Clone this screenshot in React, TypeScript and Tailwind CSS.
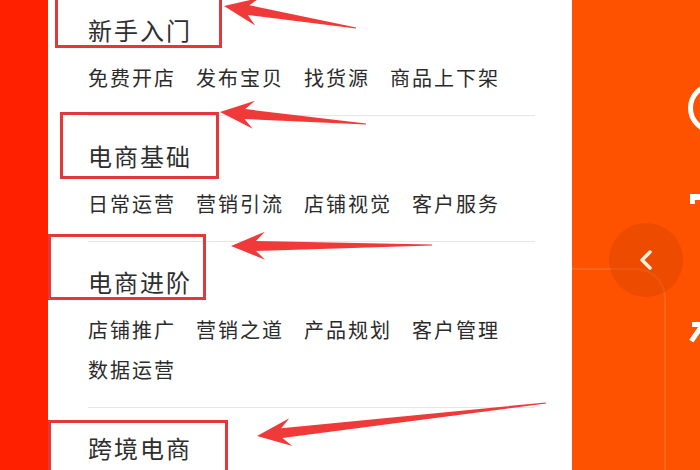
import React from "react";

type Section = {
  title: string;
  items: string[];
};

const sections: Section[] = [
  { title: "新手入门", items: ["免费开店", "发布宝贝", "找货源", "商品上下架"] },
  { title: "电商基础", items: ["日常运营", "营销引流", "店铺视觉", "客户服务"] },
  { title: "电商进阶", items: ["店铺推广", "营销之道", "产品规划", "客户管理", "数据运营"] },
  { title: "跨境电商", items: [] },
];

type Pt = [number, number];

// annotation arrows: tip, tail
const arrows: { tip: Pt; tail: Pt }[] = [
  { tip: [224, 6], tail: [356, 28] },
  { tip: [220, 112], tail: [366, 124] },
  { tip: [231, 246], tail: [432, 245] },
  { tip: [257, 436], tail: [546, 403] },
];

function arrowPoints(tip: Pt, tail: Pt) {
  const dx = tail[0] - tip[0];
  const dy = tail[1] - tip[1];
  const len = Math.hypot(dx, dy);
  const ux = dx / len;
  const uy = dy / len;
  const nx = -uy;
  const ny = ux;
  const at = (d: number, w: number): string =>
    `${(tip[0] + ux * d + nx * w).toFixed(1)},${(tip[1] + uy * d + ny * w).toFixed(1)}`;
  return [
    at(0, 0),
    at(34, 14),
    at(25, 5),
    at(len, 0.6),
    at(len, -0.6),
    at(25, -5),
    at(34, -14),
  ].join(" ");
}

const boxes = [
  "left-[55px] top-[-10px] w-[167px] h-[58px]",
  "left-[60px] top-[112px] w-[159px] h-[67px]",
  "left-[48px] top-[234px] w-[158px] h-[66px]",
  "left-[48px] top-[420px] w-[180px] h-[70px]",
];

export default function App() {
  return (
    <div
      className="relative flex h-[470px] w-[700px] overflow-hidden bg-white"
      style={{ fontFamily: '"Noto Sans CJK SC", "Noto Sans", sans-serif' }}
    >
      {/* red side strip */}
      <div className="w-[48px] shrink-0 bg-[#ff2000]" />

      {/* menu panel */}
      <div className="flex w-[524px] shrink-0 flex-col gap-[20px] pl-[40px] pr-[37px] pt-[10px]">
        {sections.map((s) => (
          <section key={s.title} className="flex flex-col">
            <h2 className="h-[40px] text-[24px] leading-[40px] tracking-[2px] text-[#2e2e2e]">
              {s.title}
            </h2>
            {s.items.length > 0 && (
              <>
                <ul className="mt-[8px] flex flex-wrap gap-x-[20px] text-[20px] leading-[40px] tracking-[2px] text-[#2b2b2b]">
                  {s.items.map((it) => (
                    <li key={it}>{it}</li>
                  ))}
                </ul>
                <div className="mt-[17px] h-px bg-[#e6e6e6]" />
              </>
            )}
          </section>
        ))}
      </div>

      {/* orange banner */}
      <div className="relative flex-1 bg-[#ff5200]">
        <div className="absolute left-0 top-[268px] h-[220px] w-[94px] rounded-tr-[30px] border-r-2 border-t-2 border-[#ff7a3a]/50" />
        <div className="absolute left-[37px] top-[223px] flex h-[74px] w-[74px] items-center justify-center rounded-full bg-[#d84300]/45">
          <svg width="18" height="24" viewBox="0 0 18 24" fill="none">
            <path d="M13 4 L5 12 L13 20" stroke="#fff1dc" strokeWidth="3.5" strokeLinecap="round" strokeLinejoin="round" />
          </svg>
        </div>
        {/* cut-off banner graphics at the right edge */}
        <div className="absolute left-[116px] top-[83px] h-[50px] w-[50px] rounded-full border-[5px] border-white" />
        <div className="absolute left-[118px] top-[194px] h-[6px] w-[20px] bg-white" />
        <div className="absolute left-[118px] top-[194px] h-[10px] w-[5px] bg-white" />
        <div className="absolute left-[120px] top-[322px] h-[5px] w-[20px] bg-white" />
        <div className="absolute left-[126px] top-[312px] h-[32px] w-[5px] rotate-[35deg] bg-white" />
      </div>

      {/* annotation overlay */}
      {boxes.map((b) => (
        <div key={b} className={`absolute border-[3px] border-[#e2383c] ${b}`} />
      ))}
      <svg className="pointer-events-none absolute left-0 top-0" width="700" height="470">
        {arrows.map((a, i) => (
          <polygon key={i} points={arrowPoints(a.tip, a.tail)} fill="#f03a3a" />
        ))}
      </svg>
    </div>
  );
}
